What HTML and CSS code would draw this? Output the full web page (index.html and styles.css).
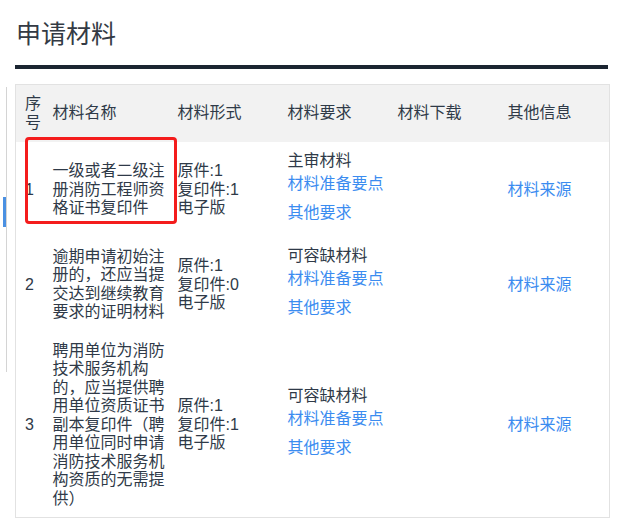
FILE: index.html
```html
<!DOCTYPE html>
<html lang="zh-CN">
<head>
<meta charset="utf-8">
<title>申请材料</title>
<link rel="stylesheet" href="styles.css">
</head>
<body>
<div class="side-track"><span class="side-thumb"></span></div>
<div class="page">
  <h1 class="title">申请材料</h1>
  <div class="title-bar"></div>
  <div class="table-wrap">
    <table class="mat-table">
      <colgroup>
        <col class="c-no"><col class="c-name"><col class="c-form"><col class="c-req"><col class="c-dl"><col class="c-other">
      </colgroup>
      <thead>
        <tr>
          <th class="no">序号</th>
          <th>材料名称</th>
          <th>材料形式</th>
          <th>材料要求</th>
          <th>材料下载</th>
          <th>其他信息</th>
        </tr>
      </thead>
      <tbody>
        <tr>
          <td class="no">1</td>
          <td>一级或者二级注册消防工程师资格证书复印件</td>
          <td>原件:1<br>复印件:1<br>电子版</td>
          <td><div class="req"><div>主审材料</div><a class="lnk first">材料准备要点</a><a class="lnk second">其他要求</a></div></td>
          <td></td>
          <td><a class="lnk">材料来源</a></td>
        </tr>
        <tr>
          <td class="no">2</td>
          <td>逾期申请初始注册的，还应当提交达到继续教育要求的证明材料</td>
          <td>原件:1<br>复印件:0<br>电子版</td>
          <td><div class="req"><div>可容缺材料</div><a class="lnk first">材料准备要点</a><a class="lnk second">其他要求</a></div></td>
          <td></td>
          <td><a class="lnk">材料来源</a></td>
        </tr>
        <tr>
          <td class="no">3</td>
          <td>聘用单位为消防技术服务机构的，应当提供聘用单位资质证书副本复印件（聘用单位同时申请消防技术服务机构资质的无需提供）</td>
          <td>原件:1<br>复印件:1<br>电子版</td>
          <td><div class="req"><div>可容缺材料</div><a class="lnk first">材料准备要点</a><a class="lnk second">其他要求</a></div></td>
          <td></td>
          <td><a class="lnk">材料来源</a></td>
        </tr>
      </tbody>
    </table>
    <div class="highlight"></div>
  </div>
</div>
</body>
</html>
```

FILE: styles.css
```css
html, body {
  margin: 0;
  padding: 0;
  background: #ffffff;
}
body {
  font-family: "Liberation Sans", "Noto Sans CJK SC", sans-serif;
  color: #2f3a48;
  position: relative;
}
.side-track {
  position: absolute;
  left: 6px;
  top: 87px;
  width: 1px;
  height: 285px;
  background: #d4d4d4;
}
.side-thumb {
  position: absolute;
  left: -3px;
  top: 110px;
  width: 3px;
  height: 30px;
  background: #4a90e2;
}
.page {
  padding: 0 29px 0 15px;
}
.title {
  margin: 17px 0 0 1px;
  font-size: 25px;
  line-height: 34px;
  font-weight: normal;
  color: #333a44;
}
.title-bar {
  margin-top: 14px;
  height: 4px;
  background: #1b2531;
}
.table-wrap {
  position: relative;
  margin-top: 15px;
}
.mat-table {
  width: 594px;
  table-layout: fixed;
  border-collapse: collapse;
  border: 1px solid #e2e2e2;
  font-size: 16px;
  line-height: 18.5px;
}
.c-no { width: 28px; }
.c-name { width: 125px; }
.c-form { width: 110px; }
.c-req { width: 110px; }
.c-dl { width: 110px; }
.c-other { width: 111px; }
.mat-table th,
.mat-table td {
  padding: 10px 4px 10px 9px;
  text-align: left;
  vertical-align: middle;
  font-weight: normal;
}
.mat-table td {
  padding-top: 9.5px;
  padding-bottom: 9px;
}
.mat-table th.no,
.mat-table td.no {
  padding-right: 3px;
}
.mat-table thead tr {
  background: #f2f2f2;
}
.req {
  margin-bottom: 6px;
}
.lnk {
  display: block;
  color: #3b8cf0;
  text-decoration: none;
}
.lnk.first {
  margin-top: 5px;
}
.lnk.second {
  margin-top: 10px;
}
.highlight {
  position: absolute;
  left: 10px;
  top: 53px;
  width: 146px;
  height: 81px;
  border: 3px solid #f41c1c;
  border-radius: 4px;
}
```
